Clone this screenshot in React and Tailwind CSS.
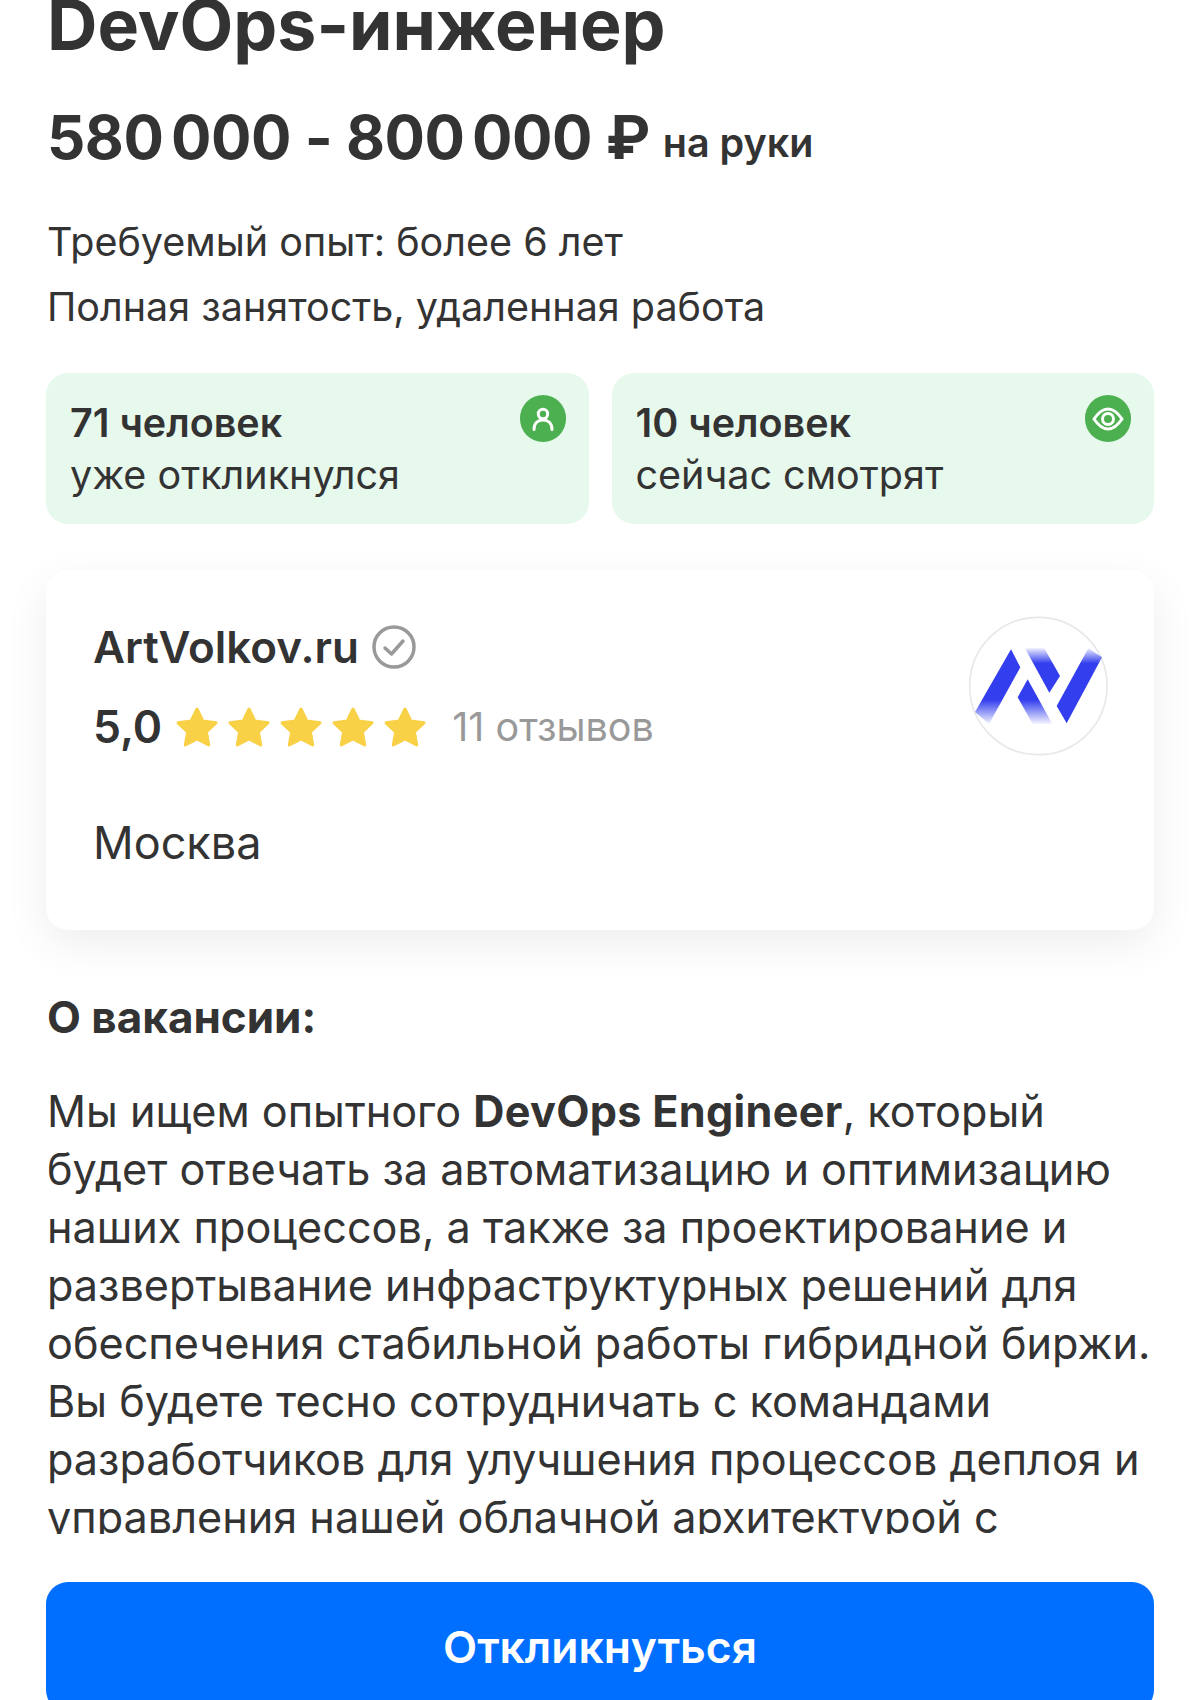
const desc = (
  <>
    Мы ищем опытного <b className="font-bold tracking-[0.3px]">DevOps Engineer</b>, который будет отвечать за автоматизацию и оптимизацию наших процессов, а также за проектирование и развертывание инфраструктурных решений для обеспечения стабильной работы гибридной биржи. Вы будете тесно сотрудничать с командами разработчиков для улучшения процессов деплоя и управления нашей облачной архитектурой с использованием современных инструментов.
  </>
);

function Star() {
  return (
    <svg width="44" height="42" viewBox="0 0 44 42" className="block">
      <path d="M22 3 L27.8 15 L41 16.8 L31.4 26 L33.7 39 L22 32.8 L10.3 39 L12.6 26 L3 16.8 L16.2 15 Z" fill="#f8d147" stroke="#f8d147" strokeWidth="3" strokeLinejoin="round" />
    </svg>
  );
}

function Stat({ n, t, icon }) {
  return (
    <div className="flex-1 h-[151px] rounded-[22px] bg-[#e7f9ed] pl-[24px] pr-[23px] pt-[24px] flex justify-between items-start">
      <div>
        <div className="text-[39.5px] leading-[52px] font-semibold">{n}</div>
        <div className="text-[39.5px] leading-[52px]">{t}</div>
      </div>
      <div className="w-[46px] h-[47px] -mt-[2px] rounded-full bg-[#4cb050] flex items-center justify-center">{icon}</div>
    </div>
  );
}

function Logo() {
  return (
    <svg width="180" height="180" viewBox="0 0 540 540" className="block -mr-[23px] -mt-[19px]">
      <defs>
        <linearGradient id="a" gradientUnits="userSpaceOnUse" x1="0" y1="300" x2="0" y2="372">
          <stop offset="0" stopColor="#333fee" /><stop offset="1" stopColor="#333fee" stopOpacity="0.05" />
        </linearGradient>
        <linearGradient id="b" gradientUnits="userSpaceOnUse" x1="0" y1="190" x2="0" y2="145">
          <stop offset="0" stopColor="#333fee" /><stop offset="1" stopColor="#333fee" stopOpacity="0.1" />
        </linearGradient>
      </defs>
      <circle cx="262" cy="258" r="206" fill="#fff" stroke="#e8e8e8" strokeWidth="5" />
      <path d="M180 148 L208 202 L114 372 L72 336 Z" fill="url(#a)" />
      <path d="M222 145 L280 145 L327 228 L295 278 Z" fill="url(#b)" />
      <path d="M230 238 L304 372 L245 372 L200 292 Z" fill="url(#a)" />
      <path d="M412 145 L453 172 L347 370 L317 318 Z" fill="url(#b)" />
    </svg>
  );
}

export default function App() {
  return (
    <div className="w-[1200px] h-[1700px] overflow-hidden bg-white text-[#333] font-['Inter',sans-serif] relative">
      <div className="px-[47px]">
        <h1 className="text-[69.8px] leading-[76px] font-bold -mt-[13px]">DevOps-инженер</h1>
        <div className="mt-[38px] flex items-end font-semibold">
          <span className="text-[60px] leading-[72px] whitespace-nowrap font-bold tracking-[-0.5px]">
            <span className="[word-spacing:-6px]">580 000</span> - <span className="[word-spacing:-6px]">800 000</span> ₽
          </span>
          <span className="text-[39.5px] leading-[48px] pb-[6px] ml-[13px]">на руки</span>
        </div>
        <div className="mt-[37px] text-[39.5px] leading-[65px]">
          <div>Требуемый опыт: более 6 лет</div>
          <div>Полная занятость, удаленная работа</div>
        </div>
      </div>
      <div className="px-[46px] mt-[33px] flex gap-[23px]">
        <Stat n="71 человек" t="уже откликнулся" icon={
          <svg width="24" height="24" viewBox="0 0 24 24" fill="none" stroke="#fff" strokeWidth="3" strokeLinecap="round">
            <circle cx="12" cy="7" r="4.7" />
            <path d="M3 22.5 C3 16 7 13 12 13 C17 13 21 16 21 22.5" />
          </svg>
        } />
        <Stat n="10 человек" t="сейчас смотрят" icon={
          <svg width="32" height="24" viewBox="0 0 32 24" fill="none" stroke="#fff" strokeWidth="3">
            <path d="M2 12 C7 4.5 11.5 2 16 2 C20.5 2 25 4.5 30 12 C25 19.5 20.5 22 16 22 C11.5 22 7 19.5 2 12 Z" />
            <circle cx="16" cy="12" r="5.5" />
          </svg>
        } />
      </div>
      <div className="mx-[46px] mt-[46px] h-[360px] rounded-[22px] bg-white shadow-[0_14px_46px_rgba(0,0,0,0.07)] pl-[47px] pr-[46px] pt-[49px] flex justify-between items-start">
        <div>
          <div className="flex items-center gap-[13px]">
            <span className="text-[44px] leading-[56px] font-semibold">ArtVolkov.ru</span>
            <svg width="44" height="44" viewBox="0 0 44 44" fill="none" stroke="#999" strokeWidth="3.5" strokeLinecap="round" strokeLinejoin="round">
              <circle cx="22" cy="22" r="20" />
              <path d="M13 23 L19.5 29 L31 16" />
            </svg>
          </div>
          <div className="mt-[21px] flex items-center">
            <span className="text-[44.5px] leading-[56px] font-semibold">5,0</span>
            <div className="ml-[13px] flex gap-[8px]">
              <Star /><Star /><Star /><Star /><Star />
            </div>
            <span className="ml-[25px] pt-[2px] text-[39.5px] text-[#999]">11 отзывов</span>
          </div>
          <div className="mt-[58px] text-[45px] leading-[56px]">Москва</div>
        </div>
        <Logo />
      </div>
      <div className="px-[47px] mt-[62px]">
        <h2 className="text-[44px] leading-[50px] font-bold">О вакансии:</h2>
        <div className="mt-[40px] h-[452px] overflow-hidden text-[43.2px] leading-[58px]">{desc}</div>
      </div>
      <div className="mx-[46px] mt-[48px] h-[130px] rounded-[22px] bg-[#006fff] text-white text-[44.4px] font-semibold flex items-center justify-center">
        Откликнуться
      </div>
    </div>
  );
}
